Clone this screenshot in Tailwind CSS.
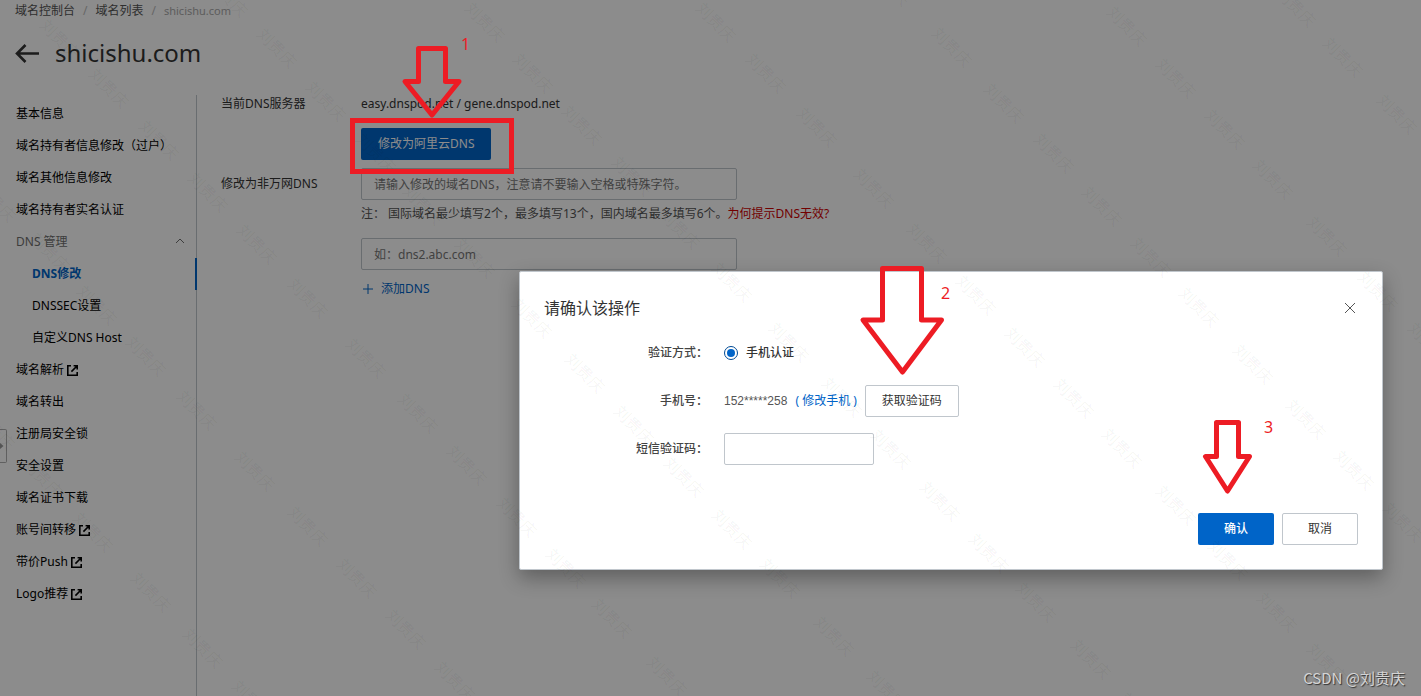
<!DOCTYPE html>
<html lang="zh-CN">
<head>
<meta charset="utf-8">
<meta name="viewport" content="width=device-width, initial-scale=1">
<title>DNS修改 - shicishu.com</title>
<script src="https://cdn.jsdelivr.net/npm/@tailwindcss/browser@4"></script>
</head>
<body class="relative min-h-screen overflow-hidden bg-white font-['Noto_Sans','Noto_Sans_CJK_SC',sans-serif] text-xs text-[#333]">

<svg class="hidden" aria-hidden="true">
  <symbol id="external" viewBox="0 0 11 11"><path d="M4 .8H.8v9.4h9.4V7M6.6.8h3.6v3.6M10 1 4.4 6.6" fill="none" stroke="currentColor" stroke-width="1.6"/></symbol>
</svg>

<div class="flex min-h-screen flex-col">
  <header class="px-[15px] pt-px">
    <nav aria-label="面包屑" class="flex h-5 items-center gap-2">
      <a href="#" class="text-[#555]">域名控制台</a><span class="text-[#bbb]">/</span>
      <a href="#" class="text-[#555]">域名列表</a><span class="text-[#bbb]">/</span>
      <span class="text-[11px] text-[#aaa]">shicishu.com</span>
    </nav>
    <div class="mt-3 flex h-10 items-center gap-4">
      <a href="#" aria-label="返回"><svg class="h-5 w-6" viewBox="0 0 24 20" fill="none" stroke="currentColor" stroke-width="2.6"><path d="M24 10.500H2M10.500 2 2 10.500l8.500 8.500"/></svg></a>
      <h1 class="text-2xl">shicishu.com</h1>
    </div>
  </header>

  <div class="mt-[22px] flex flex-1">
    <aside class="w-[197px] shrink-0 border-r border-[#c0c6cc] pt-[3px] text-black">
      <nav aria-label="域名菜单">
        <a href="#" class="flex h-8 items-center px-4">基本信息</a>
        <a href="#" class="flex h-8 items-center px-4">域名持有者信息修改（过户）</a>
        <a href="#" class="flex h-8 items-center px-4">域名其他信息修改</a>
        <a href="#" class="flex h-8 items-center px-4">域名持有者实名认证</a>
        <button type="button" class="flex h-8 w-full items-center justify-between pr-3 pl-4 text-[#707070]">DNS 管理
          <svg class="size-2" viewBox="0 0 8 8" fill="none" stroke="currentColor"><path d="M0 5 4 1l4 4"/></svg></button>
        <a href="#" class="-mr-px flex h-8 items-center border-r-2 border-[#0064c8] pl-8 font-bold text-[#0064c8]">DNS修改</a>
        <a href="#" class="flex h-8 items-center pl-8">DNSSEC设置</a>
        <a href="#" class="flex h-8 items-center pl-8">自定义DNS Host</a>
        <a href="#" class="flex h-8 items-center gap-[3px] px-4">域名解析<svg class="size-[11px]"><use href="#external"/></svg></a>
        <a href="#" class="flex h-8 items-center px-4">域名转出</a>
        <a href="#" class="flex h-8 items-center px-4">注册局安全锁</a>
        <a href="#" class="flex h-8 items-center px-4">安全设置</a>
        <a href="#" class="flex h-8 items-center px-4">域名证书下载</a>
        <a href="#" class="flex h-8 items-center gap-[3px] px-4">账号间转移<svg class="size-[11px]"><use href="#external"/></svg></a>
        <a href="#" class="flex h-8 items-center gap-[3px] px-4">带价Push<svg class="size-[11px]"><use href="#external"/></svg></a>
        <a href="#" class="flex h-8 items-center gap-[3px] px-4">Logo推荐<svg class="size-[11px]"><use href="#external"/></svg></a>
      </nav>
    </aside>

    <main class="flex-1 px-6 pt-px">
      <div class="flex">
        <div class="w-[140px] shrink-0 leading-4">当前DNS服务器</div>
        <div>
          <p class="leading-4">easy.dnspod.net / gene.dnspod.net</p>
          <button type="button" class="mt-4 h-8 rounded-xs bg-[#0064c8] px-[17px] text-white">修改为阿里云DNS</button>
        </div>
      </div>
      <div class="mt-2 flex">
        <label for="dns1" class="w-[140px] shrink-0 leading-8">修改为非万网DNS</label>
        <div>
          <input id="dns1" type="text" placeholder="请输入修改的域名DNS，注意请不要输入空格或特殊字符。" class="block h-8 w-[376px] rounded-xs border border-[#c0c6cc] px-3 placeholder:text-[#777]">
          <p class="mt-1 leading-5 text-[#555]">注： 国际域名最少填写2个，最多填写13个，国内域名最多填写6个。<a href="#" class="text-[#d00000]">为何提示DNS无效?</a></p>
          <input id="dns2" type="text" aria-label="第二个DNS" placeholder="如：dns2.abc.com" class="mt-3.5 block h-8 w-[376px] rounded-xs border border-[#c0c6cc] px-3 placeholder:text-[#777]">
          <button type="button" class="mt-[9px] flex h-5 items-center gap-2 pl-0.5 text-[#0064c8]"><svg class="size-2.5" viewBox="0 0 10 10" stroke="currentColor"><path d="M5 0v10M0 5h10"/></svg>添加DNS</button>
        </div>
      </div>
    </main>
  </div>
</div>

<button type="button" aria-label="展开侧栏" class="absolute top-[429px] left-0 flex h-[34px] w-[7px] items-center rounded-r-xs border border-l-0 border-[#b0b0b0] bg-white text-[#999]"><svg class="h-2 w-1" viewBox="0 0 4 8" fill="currentColor"><path d="M0 1l3.500 3L0 7z"/></svg></button>

<div class="absolute inset-0 bg-black/45"></div>

<section role="dialog" aria-modal="true" aria-labelledby="dlg" class="absolute top-[271px] right-[38px] w-[864px] rounded-xs border border-[#c0c6cc] bg-white px-6 pt-5 pb-6 shadow-[0_8px_20px_rgba(0,0,0,0.32)]">
  <div class="flex h-8 items-center justify-between">
    <h2 id="dlg" class="text-base">请确认该操作</h2>
    <button type="button" aria-label="关闭" class="mr-0.5 text-[#555]"><svg class="size-3" viewBox="0 0 12 12" stroke="currentColor"><path d="M1 1l10 10M11 1 1 11"/></svg></button>
  </div>
  <form class="mt-[13px] grid grid-cols-[164px_1fr] items-center gap-4">
    <span class="text-right font-medium text-[#444]">验证方式：</span>
    <label class="flex h-8 items-center gap-2 font-medium"><input type="radio" name="m" checked class="size-3.5 appearance-none rounded-full border border-[#004a94] bg-[#0064c8] bg-clip-content p-0.5">手机认证</label>
    <span class="text-right font-medium text-[#444]">手机号：</span>
    <div class="flex h-8 items-center gap-2 text-[#555]"><span class="font-['Liberation_Sans',sans-serif]">152*****258</span><a href="#" class="text-[#0064c8]">( 修改手机 )</a>
      <button type="button" class="h-8 rounded-xs border border-[#c0c6cc] bg-white px-4 text-[#333]">获取验证码</button></div>
    <label for="sms" class="text-right font-medium text-[#444]">短信验证码：</label>
    <input id="sms" type="text" class="h-8 w-[150px] rounded-xs border border-[#c0c6cc] bg-white px-3">
  </form>
  <div class="mt-12 flex justify-end gap-2">
    <button type="button" class="h-8 w-[76px] rounded-xs bg-[#0064c8] font-medium text-white">确认</button>
    <button type="button" class="h-8 w-[76px] rounded-xs border border-[#c0c6cc] bg-white">取消</button>
  </div>
</section>

<svg id="marks" aria-hidden="true" class="pointer-events-none absolute inset-0 size-full fill-black/5 text-base"></svg>

<svg aria-hidden="true" class="pointer-events-none absolute inset-0 size-full" fill="none" stroke="#ed1c24" stroke-width="5" stroke-linejoin="round">
  <path stroke-linejoin="miter" d="M352.500 120.500h159v51h-159z"/>
  <path d="M418.500 48.500h27v33H459L432 115l-27-33.500h13.500z"/>
  <path d="M882.500 268.500h39V320h20L902.500 372 863 320h19.500z"/>
  <path d="M1216.500 422.500h22v34h11l-22 34.500-22-34.500h11z"/>
  <g fill="#ed1c24" stroke="none" class="text-base"><text x="461" y="50">1</text><text x="941" y="299">2</text><text x="1264" y="433">3</text></g>
</svg>

<div class="pointer-events-none absolute right-4 bottom-1.5 font-['Noto_Sans_CJK_SC',sans-serif] text-[15px] leading-6 text-[#d4d4d4] [text-shadow:1px_1px_1px_#333]">CSDN @刘贵庆</div>

<script>
  // Centres of the diagonal name marks
  const centres = [
    [60,39],[109,88],[159,140],[208,192],[257,244],[228,-3],[277,48],[326,101],[-4,202],[50,252],[97,305],[146,356],[197,410],
    [308,298],[366,358],[418,413],[467,465],[517,517],[566,568],[612,618],[667,676],[-5,430],[43,478],[93,532],[151,592],[203,648],[252,700],
    [255,471],[308,526],[357,578],[406,629],[455,681],[485,22],[533,73],[582,125],[632,176],[680,229],[732,282],[789,342],[842,397],[891,449],
    [940,501],[989,553],[1036,602],[1091,659],[1140,712],[376,153],[423,205],[475,258],[532,318],[585,373],[634,425],[684,477],[732,529],[780,578],
    [834,636],[887,690],[716,22],[766,73],[817,127],[874,188],[927,243],[976,295],[1025,347],[1074,398],[1122,448],[1176,505],[1228,560],[1277,612],
    [1327,663],[1380,715],[890,-14],[952,47],[1004,103],[1054,153],[1102,206],[1151,257],[1199,307],[1253,364],[1306,419],[1354,470],[1403,522],
    [1127,26],[1176,78],[1225,129],[1273,179],[1327,236],[1378,291],[1428,342],[1296,7],[1343,57],[1397,114]
  ];
  const marks = document.getElementById('marks');
  for (const [x, y] of centres) {
    const t = document.createElementNS('http://www.w3.org/2000/svg', 'text');
    t.setAttribute('transform', `translate(${x} ${y}) rotate(45)`);
    t.setAttribute('text-anchor', 'middle');
    t.setAttribute('dy', '6');
    t.textContent = '刘贵庆';
    marks.append(t);
  }
</script>
</body>
</html>
